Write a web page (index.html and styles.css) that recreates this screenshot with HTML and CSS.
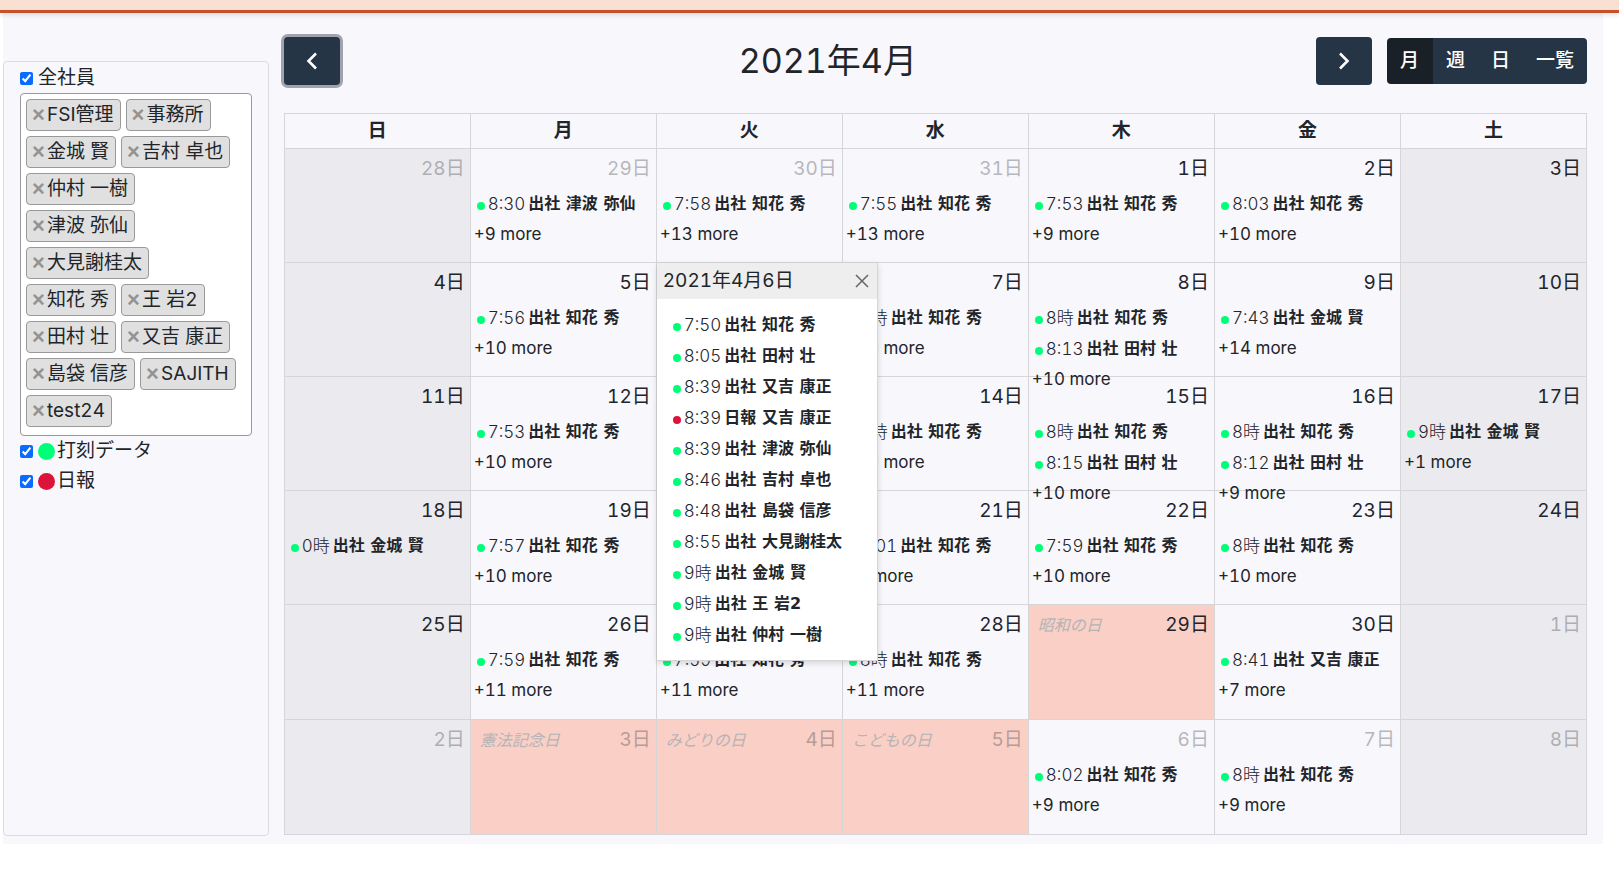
FILE: index.html
```html
<!DOCTYPE html>
<html lang="ja">
<head>
<meta charset="utf-8">
<title>2021年4月</title>
<link rel="stylesheet" href="styles.css">
</head>
<body>
<header class="topbar"></header>
<main class="page">
  <aside class="side">
    <div class="filters">
      <label class="check"><input type="checkbox" checked> 全社員</label>
      <ul class="chips">
        <li class="chip"><button type="button" class="remove">×</button>FSI管理</li>
        <li class="chip"><button type="button" class="remove">×</button>事務所</li>
        <li class="chip"><button type="button" class="remove">×</button>金城 賢</li>
        <li class="chip"><button type="button" class="remove">×</button>吉村 卓也</li>
        <li class="chip"><button type="button" class="remove">×</button>仲村 一樹</li>
        <li class="chip"><button type="button" class="remove">×</button>津波 弥仙</li>
        <li class="chip"><button type="button" class="remove">×</button>大見謝桂太</li>
        <li class="chip"><button type="button" class="remove">×</button>知花 秀</li>
        <li class="chip"><button type="button" class="remove">×</button>王 岩2</li>
        <li class="chip"><button type="button" class="remove">×</button>田村 壮</li>
        <li class="chip"><button type="button" class="remove">×</button>又吉 康正</li>
        <li class="chip"><button type="button" class="remove">×</button>島袋 信彦</li>
        <li class="chip"><button type="button" class="remove">×</button>SAJITH</li>
        <li class="chip"><button type="button" class="remove">×</button>test24</li>
      </ul>
      <label class="check"><input type="checkbox" checked> <span class="key"><i class="swatch green"></i>打刻データ</span></label>
      <label class="check"><input type="checkbox" checked> <span class="key"><i class="swatch red"></i>日報</span></label>
    </div>
  </aside>
  <section class="calendar">
    <div class="toolbar">
      <button type="button" class="nav focused" aria-label="前へ"><svg width="12" height="18" viewBox="0 0 12 18"><path d="M10 1.5 2.5 9l7.500 7.500"/></svg></button>
      <h1 class="title">2021年4月</h1>
      <div class="right">
        <button type="button" class="nav" aria-label="次へ"><svg width="12" height="18" viewBox="0 0 12 18"><path d="M2 1.500 9.500 9 2 16.500"/></svg></button>
        <div class="views"><button type="button" class="active">月</button><button type="button">週</button><button type="button">日</button><button type="button">一覧</button></div>
      </div>
    </div>
    <table class="grid">
      <thead><tr><th>日</th><th>月</th><th>火</th><th>水</th><th>木</th><th>金</th><th>土</th></tr></thead>
      <tbody>
        <tr>
          <td class="weekend other"><div class="day"><div class="top"><span class="date">28日</span></div></div></td>
          <td class="other"><div class="day"><div class="top"><span class="date">29日</span></div><div class="event"><i class="dot"></i><time>8:30</time><b>出社 津波 弥仙</b></div><a class="more" href="#">+9 more</a></div></td>
          <td class="other"><div class="day"><div class="top"><span class="date">30日</span></div><div class="event"><i class="dot"></i><time>7:58</time><b>出社 知花 秀</b></div><a class="more" href="#">+13 more</a></div></td>
          <td class="other"><div class="day"><div class="top"><span class="date">31日</span></div><div class="event"><i class="dot"></i><time>7:55</time><b>出社 知花 秀</b></div><a class="more" href="#">+13 more</a></div></td>
          <td><div class="day"><div class="top"><span class="date">1日</span></div><div class="event"><i class="dot"></i><time>7:53</time><b>出社 知花 秀</b></div><a class="more" href="#">+9 more</a></div></td>
          <td><div class="day"><div class="top"><span class="date">2日</span></div><div class="event"><i class="dot"></i><time>8:03</time><b>出社 知花 秀</b></div><a class="more" href="#">+10 more</a></div></td>
          <td class="weekend"><div class="day"><div class="top"><span class="date">3日</span></div></div></td>
        </tr>
        <tr>
          <td class="weekend"><div class="day"><div class="top"><span class="date">4日</span></div></div></td>
          <td><div class="day"><div class="top"><span class="date">5日</span></div><div class="event"><i class="dot"></i><time>7:56</time><b>出社 知花 秀</b></div><a class="more" href="#">+10 more</a></div></td>
          <td><div class="day">
            <div class="popover">
              <div class="pophead"><span>2021年4月6日</span><button type="button" class="close" aria-label="閉じる"><svg width="14" height="14" viewBox="0 0 14 14"><path d="m1 1 12 12M13 1 1 13"/></svg></button></div>
              <div class="popbody">
                <div class="event"><i class="dot"></i><time>7:50</time><b>出社 知花 秀</b></div>
                <div class="event"><i class="dot"></i><time>8:05</time><b>出社 田村 壮</b></div>
                <div class="event"><i class="dot"></i><time>8:39</time><b>出社 又吉 康正</b></div>
                <div class="event"><i class="dot red"></i><time>8:39</time><b>日報 又吉 康正</b></div>
                <div class="event"><i class="dot"></i><time>8:39</time><b>出社 津波 弥仙</b></div>
                <div class="event"><i class="dot"></i><time>8:46</time><b>出社 吉村 卓也</b></div>
                <div class="event"><i class="dot"></i><time>8:48</time><b>出社 島袋 信彦</b></div>
                <div class="event"><i class="dot"></i><time>8:55</time><b>出社 大見謝桂太</b></div>
                <div class="event"><i class="dot"></i><time>9時</time><b>出社 金城 賢</b></div>
                <div class="event"><i class="dot"></i><time>9時</time><b>出社 王 岩2</b></div>
                <div class="event"><i class="dot"></i><time>9時</time><b>出社 仲村 一樹</b></div>
              </div>
            </div>
          </div></td>
          <td><div class="day"><div class="top"><span class="date">7日</span></div><div class="event"><i class="dot"></i><time>8時</time><b>出社 知花 秀</b></div><a class="more" href="#">+10 more</a></div></td>
          <td><div class="day"><div class="top"><span class="date">8日</span></div><div class="event"><i class="dot"></i><time>8時</time><b>出社 知花 秀</b></div><div class="event"><i class="dot"></i><time>8:13</time><b>出社 田村 壮</b></div><a class="more" href="#">+10 more</a></div></td>
          <td><div class="day"><div class="top"><span class="date">9日</span></div><div class="event"><i class="dot"></i><time>7:43</time><b>出社 金城 賢</b></div><a class="more" href="#">+14 more</a></div></td>
          <td class="weekend"><div class="day"><div class="top"><span class="date">10日</span></div></div></td>
        </tr>
        <tr>
          <td class="weekend"><div class="day"><div class="top"><span class="date">11日</span></div></div></td>
          <td><div class="day"><div class="top"><span class="date">12日</span></div><div class="event"><i class="dot"></i><time>7:53</time><b>出社 知花 秀</b></div><a class="more" href="#">+10 more</a></div></td>
          <td><div class="day"></div></td>
          <td><div class="day"><div class="top"><span class="date">14日</span></div><div class="event"><i class="dot"></i><time>8時</time><b>出社 知花 秀</b></div><a class="more" href="#">+10 more</a></div></td>
          <td><div class="day"><div class="top"><span class="date">15日</span></div><div class="event"><i class="dot"></i><time>8時</time><b>出社 知花 秀</b></div><div class="event"><i class="dot"></i><time>8:15</time><b>出社 田村 壮</b></div><a class="more" href="#">+10 more</a></div></td>
          <td><div class="day"><div class="top"><span class="date">16日</span></div><div class="event"><i class="dot"></i><time>8時</time><b>出社 知花 秀</b></div><div class="event"><i class="dot"></i><time>8:12</time><b>出社 田村 壮</b></div><a class="more" href="#">+9 more</a></div></td>
          <td class="weekend"><div class="day"><div class="top"><span class="date">17日</span></div><div class="event"><i class="dot"></i><time>9時</time><b>出社 金城 賢</b></div><a class="more" href="#">+1 more</a></div></td>
        </tr>
        <tr>
          <td class="weekend"><div class="day"><div class="top"><span class="date">18日</span></div><div class="event"><i class="dot"></i><time>0時</time><b>出社 金城 賢</b></div></div></td>
          <td><div class="day"><div class="top"><span class="date">19日</span></div><div class="event"><i class="dot"></i><time>7:57</time><b>出社 知花 秀</b></div><a class="more" href="#">+10 more</a></div></td>
          <td><div class="day"></div></td>
          <td><div class="day"><div class="top"><span class="date">21日</span></div><div class="event"><i class="dot"></i><time>8:01</time><b>出社 知花 秀</b></div><a class="more" href="#">+9 more</a></div></td>
          <td><div class="day"><div class="top"><span class="date">22日</span></div><div class="event"><i class="dot"></i><time>7:59</time><b>出社 知花 秀</b></div><a class="more" href="#">+10 more</a></div></td>
          <td><div class="day"><div class="top"><span class="date">23日</span></div><div class="event"><i class="dot"></i><time>8時</time><b>出社 知花 秀</b></div><a class="more" href="#">+10 more</a></div></td>
          <td class="weekend"><div class="day"><div class="top"><span class="date">24日</span></div></div></td>
        </tr>
        <tr>
          <td class="weekend"><div class="day"><div class="top"><span class="date">25日</span></div></div></td>
          <td><div class="day"><div class="top"><span class="date">26日</span></div><div class="event"><i class="dot"></i><time>7:59</time><b>出社 知花 秀</b></div><a class="more" href="#">+11 more</a></div></td>
          <td><div class="day"><div class="top"></div><div class="event"><i class="dot"></i><time>7:59</time><b>出社 知花 秀</b></div><a class="more" href="#">+11 more</a></div></td>
          <td><div class="day"><div class="top"><span class="date">28日</span></div><div class="event"><i class="dot"></i><time>8時</time><b>出社 知花 秀</b></div><a class="more" href="#">+11 more</a></div></td>
          <td class="holiday"><div class="day"><div class="top"><em>昭和の日</em><span class="date">29日</span></div></div></td>
          <td><div class="day"><div class="top"><span class="date">30日</span></div><div class="event"><i class="dot"></i><time>8:41</time><b>出社 又吉 康正</b></div><a class="more" href="#">+7 more</a></div></td>
          <td class="weekend other"><div class="day"><div class="top"><span class="date">1日</span></div></div></td>
        </tr>
        <tr>
          <td class="weekend other"><div class="day"><div class="top"><span class="date">2日</span></div></div></td>
          <td class="holiday other"><div class="day"><div class="top"><em>憲法記念日</em><span class="date">3日</span></div></div></td>
          <td class="holiday other"><div class="day"><div class="top"><em>みどりの日</em><span class="date">4日</span></div></div></td>
          <td class="holiday other"><div class="day"><div class="top"><em>こどもの日</em><span class="date">5日</span></div></div></td>
          <td class="other"><div class="day"><div class="top"><span class="date">6日</span></div><div class="event"><i class="dot"></i><time>8:02</time><b>出社 知花 秀</b></div><a class="more" href="#">+9 more</a></div></td>
          <td class="other"><div class="day"><div class="top"><span class="date">7日</span></div><div class="event"><i class="dot"></i><time>8時</time><b>出社 知花 秀</b></div><a class="more" href="#">+9 more</a></div></td>
          <td class="weekend other"><div class="day"><div class="top"><span class="date">8日</span></div></div></td>
        </tr>
      </tbody>
    </table>
  </section>
</main>
</body>
</html>
```
FILE: styles.css
```css
* { box-sizing: border-box; }

body {
  margin: 0;
  background: #fff;
  color: #212529;
  font: 19px/30px Inter, "Noto Sans CJK JP", sans-serif;
  font-variant-numeric: tabular-nums;
}

button { margin: 0; border: 0; padding: 0; font: inherit; cursor: pointer; }

.topbar {
  position: relative;
  height: 13px;
  background: #f9e0d2;
  border-bottom: 3px solid #c4532d;
  box-shadow: 0 2px 5px rgba(0, 0, 0, 0.12);
}

.page {
  display: grid;
  grid-template-columns: 1fr 5fr;
  margin: 0 16px 0 3px;
  background: #f8f7fc;
}

/* Sidebar */
.side { display: flex; padding: 48px 1px 8px 0; }

.filters {
  flex: 1;
  min-width: 0;
  padding: 1px 16px;
  border: 1px solid #dbdbe2;
  border-radius: 4px;
}

.check { display: flex; align-items: center; gap: 5px; height: 30px; }
.check input { width: 13px; height: 13px; margin: 0; accent-color: #0a6cff; }
.key { display: flex; align-items: center; gap: 2px; }
.swatch { width: 17px; height: 17px; border-radius: 50%; }
.green { background: #00ff78; }
.red { background: #dc143c; }

.chips {
  display: flex;
  flex-wrap: wrap;
  gap: 5px;
  margin: 0;
  padding: 5px 9px 8px 5px;
  list-style: none;
  background: #fff;
  border: 1px solid #999;
  border-radius: 4px;
}

.chip {
  display: flex;
  align-items: center;
  gap: 3px;
  height: 32px;
  padding: 0 6px 0 5px;
  background: #e0e0e0;
  border: 1px solid #999;
  border-radius: 4px;
}

.remove {
  width: 12px;
  background: none;
  color: #939393;
  font: bold 22px/30px "Liberation Sans", sans-serif;
}

/* Calendar */
.calendar { padding: 24px 16px 9px 14px; }
.toolbar { display: flex; align-items: center; justify-content: space-between; margin-bottom: 28px; }
.title { margin: 0; font-size: 34px; line-height: 48px; font-weight: 400; }
.right { display: flex; align-items: center; gap: 15px; }

.nav {
  display: flex;
  align-items: center;
  justify-content: center;
  width: 56px;
  height: 48px;
  border-radius: 4px;
  background: #263545;
}
.nav svg { fill: none; stroke: #fff; stroke-width: 2.6; }
.focused { box-shadow: 0 0 0 3px #9fa3af; }

.views { display: flex; border-radius: 4px; overflow: hidden; }
.views button { height: 46px; padding: 0 13px; background: #263545; color: #fff; font-weight: 500; }
.views .active { padding-right: 14px; background: #1a2027; }

.grid { width: 100%; border-collapse: collapse; table-layout: fixed; }
.grid th, .grid td { padding: 0; border: 1px solid #d6d6d8; vertical-align: top; }
.grid th { height: 35px; line-height: 34px; }
.grid td { height: 114px; }
.grid tr:nth-child(n+5) td { height: 115px; }
.weekend { background: #ebeaef; }
.holiday { background: #f9cfc6; }

.day { position: relative; height: 113px; }
.top { display: flex; align-items: center; height: 39px; padding: 0 5px 0 9px; }
.top em { color: #b5b4b7; font-size: 16px; }
.date { margin-left: auto; }
.other .date { opacity: 0.3; }

.event { display: flex; align-items: center; height: 31px; padding-left: 6px; font-size: 16px; white-space: nowrap; }
.event time { font-size: 17px; font-weight: 300; }
.dot { width: 8px; height: 8px; margin: 4px 3px 0 0; border-radius: 50%; background: #00ff78; }
.dot.red { background: #dc143c; }
.event b { margin-left: 3px; font-family: "DejaVu Sans", "Noto Sans CJK JP", sans-serif; }
.more { display: block; padding-left: 3px; color: inherit; font-size: 17px; text-decoration: none; }

/* Day popover */
.popover {
  position: absolute;
  z-index: 2;
  top: 0;
  left: 0;
  width: 221px;
  background: #fff;
  border-right: 1px solid #d6d6d8;
  border-bottom: 1px solid #d6d6d8;
  box-shadow: 0 2px 6px rgba(0, 0, 0, 0.15);
}
.pophead { display: flex; align-items: center; justify-content: space-between; height: 36px; padding: 0 8px 0 6px; background: #eee; }
.close { display: flex; background: none; }
.close svg { fill: none; stroke: #666; stroke-width: 1.5; }
.popbody { padding: 10px; }
```
